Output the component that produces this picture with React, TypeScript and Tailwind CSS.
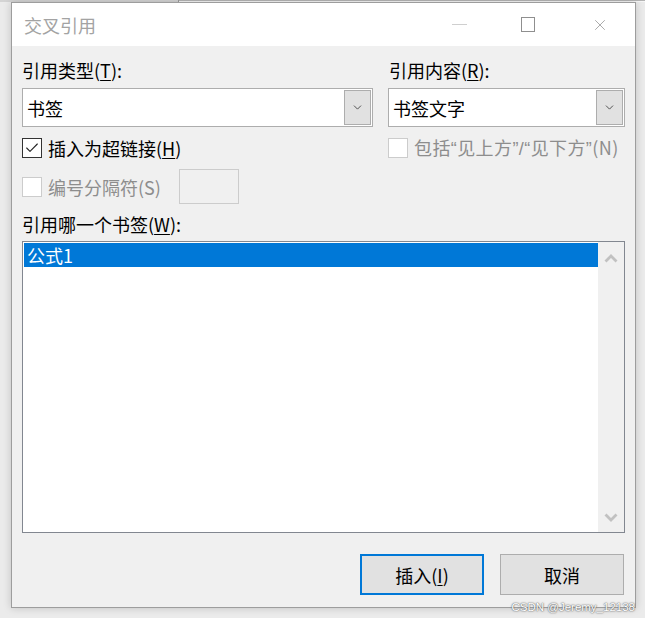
import { Check, ChevronDown, X } from "lucide-react";

const font = "font-['Noto_Sans_CJK_SC','Noto_Sans',sans-serif]";

function Combo({ value, width }: { value: string; width: string }) {
	return (
		<div className={`${width} h-[39px] flex items-center border border-[#adadad] bg-white`}>
			<span className="flex-1 pl-[4px] text-[18px] leading-[24px] text-black">{value}</span>
			<div className="w-[27px] h-[35px] mr-[1px] flex items-center justify-center border border-[#adadad] bg-[#e1e1e1]">
				<ChevronDown size={13} strokeWidth={1.5} className="text-[#333]" />
			</div>
		</div>
	);
}

function CheckBox({ checked, disabled }: { checked?: boolean; disabled?: boolean }) {
	return (
		<div
			className={`w-[20px] h-[20px] shrink-0 flex items-center justify-center bg-white border ${
				disabled ? "border-[#cccccc]" : "border-[#333333]"
			}`}
		>
			{checked && <Check size={16} strokeWidth={1.6} className="text-[#222]" />}
		</div>
	);
}

// scroll arrows of the list box
function Arrow({ up }: { up?: boolean }) {
	return (
		<svg width="14" height="9" viewBox="0 0 14 9" className="text-[#c1c1c1]">
			<polyline
				points={up ? "1.5,7.5 7,2 12.5,7.5" : "1.5,1.5 7,7 12.5,1.5"}
				fill="none"
				stroke="currentColor"
				strokeWidth="2.8"
			/>
		</svg>
	);
}

const q = "font-['Liberation_Sans',sans-serif]";

export default function App() {
	return (
		<div className={`w-[645px] h-[618px] relative overflow-hidden bg-[#ebebeb] ${font}`}>
			{/* window behind the dialog */}
			<div className="h-[2px] flex">
				<div className="w-[178px] bg-[#d4d4d4]" />
				<div className="w-px bg-[#9a9a9a]" />
				<div className="flex-1 bg-[#f7f7f7] border-t border-[#b5b5b5]" />
			</div>

			<div className="flex pl-[11px]">
				<div className="w-[625px] h-[606px] flex flex-col border border-[#9d9d9d] bg-[#f0f0f0] shadow-[0_0_8px_rgba(0,0,0,0.18)]">
					{/* title bar */}
					<div className="h-[43px] shrink-0 flex items-center bg-white">
						<span className="pl-[12px] text-[18px] leading-[24px] text-[#a3a3a3]">交叉引用</span>
						<div className="ml-auto flex items-center">
							<div className="w-[15px] h-px bg-[#cfcfcf] mr-[54px]" />
							<div className="w-[14px] h-[15px] border border-[#8f8f8f] mr-[56px]" />
							<X size={18} strokeWidth={1} className="text-[#8f8f8f] mr-[26px]" />
						</div>
					</div>

					{/* body */}
					<div className="flex-1 flex flex-col px-[10px] pt-[12px] text-[18px] leading-[24px] text-black">
						<div className="grid grid-cols-[351px_237px] gap-x-[15px]">
							<div className="flex flex-col">
								<span>
									引用类型(<u className="underline-offset-2">T</u>):
								</span>
								<div className="mt-[6px]">
									<Combo value="书签" width="w-[351px]" />
								</div>
								<div className="mt-[9px] h-[24px] flex items-center gap-[6px]">
									<CheckBox checked />
									<span>
										插入为超链接(<u className="underline-offset-2">H</u>)
									</span>
								</div>
								<div className="mt-[9px] h-[35px] flex items-center">
									<CheckBox disabled />
									<span className="ml-[6px] text-[#8d8d8d]">编号分隔符(S)</span>
									<div className="ml-[18px] w-[60px] h-[35px] border border-[#cccccc] bg-[#f0f0f0]" />
								</div>
							</div>
							<div className="flex flex-col">
								<span className="pl-[1px]">
									引用内容(<u className="underline-offset-2">R</u>):
								</span>
								<div className="mt-[6px]">
									<Combo value="书签文字" width="w-[237px]" />
								</div>
								<div className="mt-[9px] h-[24px] flex items-center gap-[6px] whitespace-nowrap">
									<CheckBox disabled />
									<span className="text-[#8d8d8d] tracking-[0.4px]">
										包括<span className={q}>“</span>见上方<span className={q}>”/“</span>见下方
										<span className={q}>”</span>(N)
									</span>
								</div>
							</div>
						</div>

						<span className="mt-[8px]">
							引用哪一个书签(<u className="underline-offset-2">W</u>):
						</span>

						<div className="mt-[5px] h-[292px] flex border border-[#828790] bg-white">
							<div className="flex-1 pl-[1px] pt-[1px]">
								<div className="h-[24px] flex items-center pl-[3px] bg-[#0078d7] text-white">公式1</div>
							</div>
							<div className="w-[26px] flex flex-col items-center justify-between bg-[#f0f0f0] pt-[12px] pb-[10px]">
								<Arrow up />
								<Arrow />
							</div>
						</div>

						<div className="mt-[21px] flex justify-end gap-[16px] pr-[1px]">
							<button className="w-[124px] h-[41px] border-2 border-[#0078d7] bg-[#e1e1e1] text-[18px] leading-[24px]">
								插入(<u className="underline-offset-2">I</u>)
							</button>
							<button className="w-[124px] h-[41px] border border-[#adadad] bg-[#e1e1e1] text-[18px] leading-[24px]">
								取消
							</button>
						</div>
					</div>
				</div>
			</div>

			<span className="absolute right-[10px] bottom-[3px] text-[11.5px] leading-[16px] text-white font-['Liberation_Sans',sans-serif] [text-shadow:0_0_2px_#666,0_0_1px_#555]">
				CSDN @Jeremy_12138
			</span>
		</div>
	);
}
